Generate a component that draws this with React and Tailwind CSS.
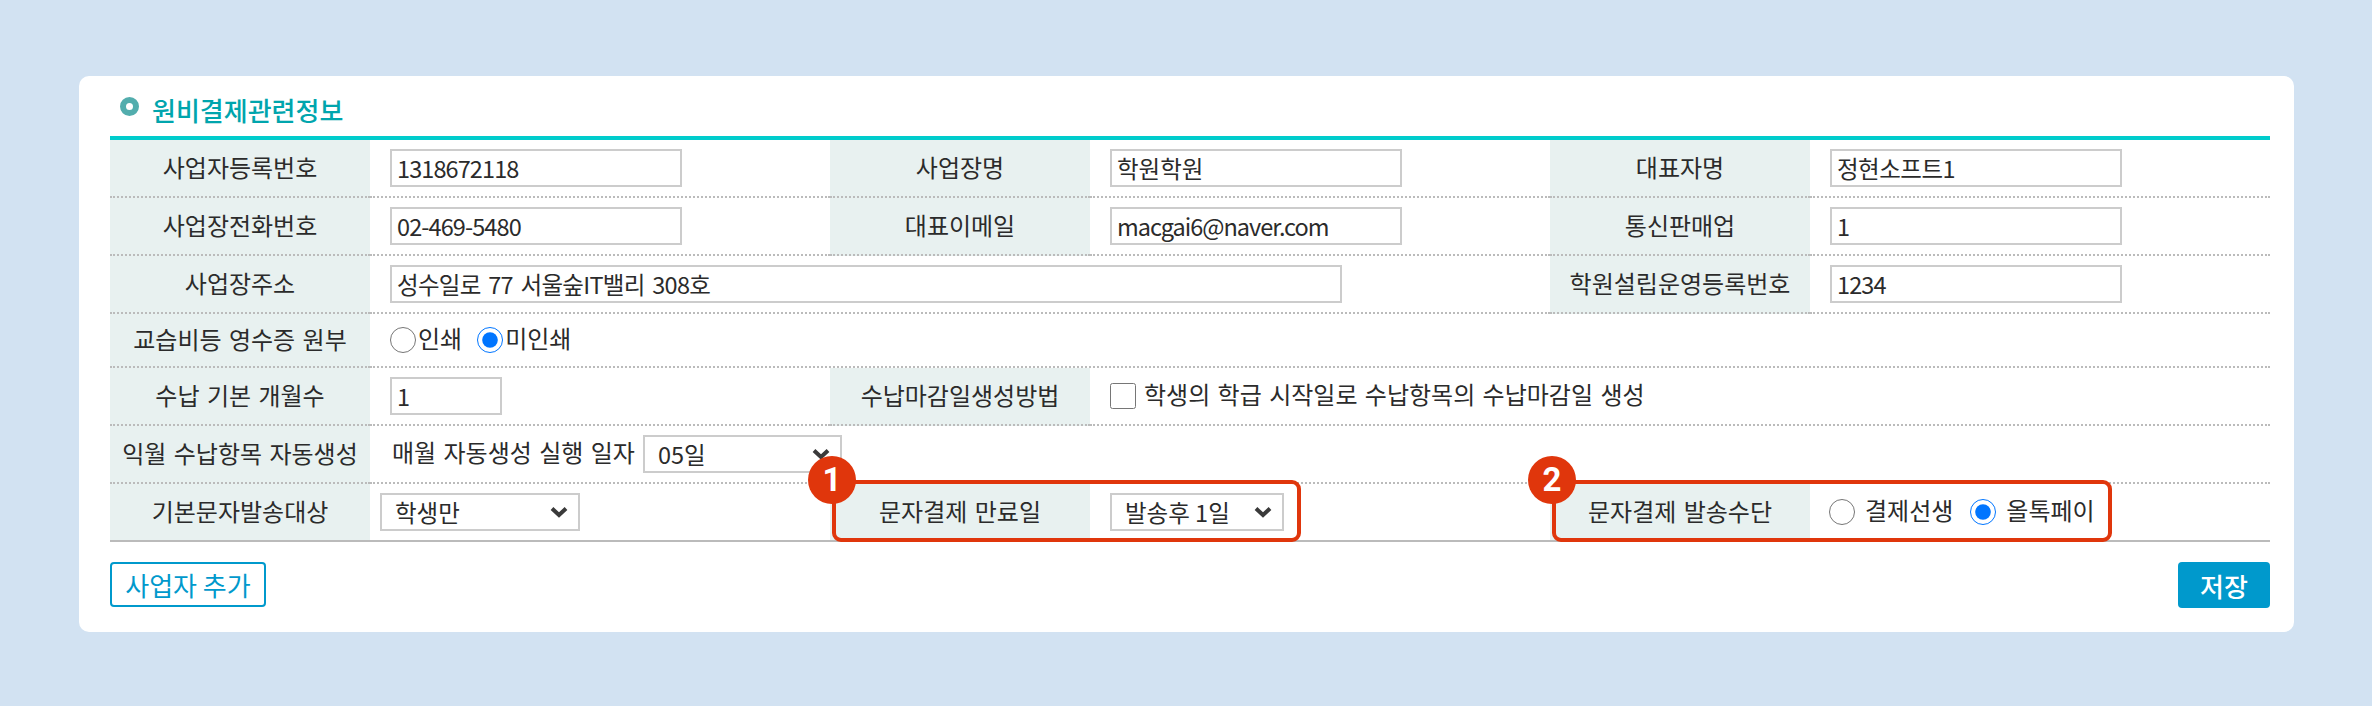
import React from 'react';

const labelCls = "bg-[#e8f1f0] text-center text-[#2b2b2b] border-b-2 border-dotted border-[#bbb] p-0 pb-[2px]";
const valueCls = "border-b-2 border-dotted border-[#bbb] p-0 pl-[20px] text-[#2b2b2b]";
const inputCls = "block h-[38px] border-2 border-[#ccc] bg-white px-[5px] text-[23.5px] text-[#2b2b2b] outline-none";

function Label({ children, className = '' }) {
    return <td className={`${labelCls} ${className}`}>{children}</td>;
}

function Field({ value, width = 'w-[292px]', className = '' }) {
    return <input readOnly type="text" defaultValue={value} className={`${inputCls} ${width} ${className}`} />;
}

// native arrow is too small, so the select gets its own chevron
function Select({ value, width }) {
    return (
        <div className={`relative ${width}`}>
            <select defaultValue={value} className="block h-[38px] w-full appearance-none border-2 border-[#ccc] bg-white pl-[13px] text-[23.5px] text-[#2b2b2b] outline-none">
                <option value={value}>{value}</option>
            </select>
            <svg className="absolute right-[12px] top-[13px] h-[12px] w-[18px] pointer-events-none" viewBox="0 0 18 12" fill="none">
                <path d="M2 2.5 L9 9 L16 2.5" stroke="#3a3a3a" strokeWidth="4" />
            </svg>
        </div>
    );
}

// red outline with the numbered badge, sits over the last table row
function Callout({ number, width }) {
    return (
        <div className={`absolute left-[2px] top-[-4px] h-[62px] ${width} rounded-[9px] border-4 border-[#e0360c] pointer-events-none`}>
            <div className="absolute left-[-28px] top-[-28px] flex h-[48px] w-[48px] items-center justify-center rounded-full bg-[#e0360c] font-['Roboto',sans-serif] text-[33px] font-bold text-white">
                {number}
            </div>
        </div>
    );
}

export default function App() {
    return (
        <div
            className="min-h-[706px] bg-[#d2e2f2] pl-[79px] pr-[78px] pt-[76px] pb-[74px] text-[24px] [word-spacing:2px]"
            style={{ fontFamily: '"Noto Sans CJK KR", "Noto Sans", sans-serif' }}
        >
            <div className="h-[556px] rounded-[10px] bg-white pl-[31px] pr-[24px]">
                <h2 className="flex h-[60px] items-center pl-[10px] text-[26px] font-medium text-[#00a5ad]">
                    <span className="mr-[13px] block h-[19px] w-[19px] rounded-full border-[6px] border-[#52adad] bg-white"></span>
                    <span className="mt-[7px]">원비결제관련정보</span>
                </h2>

                <table className="w-[2160px] table-fixed border-separate border-spacing-0 border-t-4 border-[#00cccc] border-b-0">
                    <colgroup>
                        <col className="w-[260px]" />
                        <col className="w-[460px]" />
                        <col className="w-[260px]" />
                        <col className="w-[460px]" />
                        <col className="w-[260px]" />
                        <col className="w-[460px]" />
                    </colgroup>
                    <tbody>
                        <tr className="h-[58px]">
                            <Label>사업자등록번호</Label>
                            <td className={valueCls}><Field value="1318672118" className="tracking-[-0.9px]" /></td>
                            <Label>사업장명</Label>
                            <td className={valueCls}><Field value="학원학원" /></td>
                            <Label>대표자명</Label>
                            <td className={valueCls}><Field value="정현소프트1" className="tracking-[-0.5px]" /></td>
                        </tr>
                        <tr className="h-[58px]">
                            <Label>사업장전화번호</Label>
                            <td className={valueCls}><Field value="02-469-5480" className="tracking-[-0.9px]" /></td>
                            <Label>대표이메일</Label>
                            <td className={valueCls}><Field value="macgai6@naver.com" className="tracking-[-1px]" /></td>
                            <Label>통신판매업</Label>
                            <td className={valueCls}><Field value="1" /></td>
                        </tr>
                        <tr className="h-[58px]">
                            <Label>사업장주소</Label>
                            <td colSpan={3} className={valueCls}>
                                <Field value="성수일로 77 서울숲IT밸리 308호" width="w-[952px]" className="tracking-[-0.7px] [word-spacing:3px]" />
                            </td>
                            <Label>학원설립운영등록번호</Label>
                            <td className={valueCls}><Field value="1234" className="tracking-[-0.9px]" /></td>
                        </tr>
                        <tr className="h-[54px]">
                            <Label>교습비등 영수증 원부</Label>
                            <td colSpan={5} className={valueCls}>
                                <div className="flex items-center">
                                    <input type="radio" name="receipt" className="m-0 h-[26px] w-[26px]" />
                                    <span className="ml-[2px] mr-[15px] mt-[-4px]">인쇄</span>
                                    <input type="radio" name="receipt" defaultChecked className="m-0 h-[26px] w-[26px]" />
                                    <span className="ml-[2px] mt-[-4px]">미인쇄</span>
                                </div>
                            </td>
                        </tr>
                        <tr className="h-[58px]">
                            <Label>수납 기본 개월수</Label>
                            <td className={valueCls}><Field value="1" width="w-[112px]" /></td>
                            <Label>수납마감일생성방법</Label>
                            <td colSpan={3} className={valueCls}>
                                <div className="flex items-center">
                                    <input type="checkbox" className="m-0 h-[26px] w-[26px]" />
                                    <span className="ml-[8px] mt-[-4px]">학생의 학급 시작일로 수납항목의 수납마감일 생성</span>
                                </div>
                            </td>
                        </tr>
                        <tr className="h-[58px]">
                            <Label>익월 수납항목 자동생성</Label>
                            <td colSpan={5} className={valueCls}>
                                <div className="flex items-center">
                                    <span className="ml-[2px] mr-[8px] mt-[-4px]">매월 자동생성 실행 일자</span>
                                    <Select value="05일" width="w-[199px]" />
                                </div>
                            </td>
                        </tr>
                        <tr className="h-[58px]">
                            <Label className="border-solid">기본문자발송대상</Label>
                            <td className="border-b-2 border-solid border-[#bbb] p-0 pl-[10px]">
                                <Select value="학생만" width="w-[200px]" />
                            </td>
                            <td className="relative bg-[#e8f1f0] p-0 pb-[2px] text-center text-[#2b2b2b] border-b-2 border-solid border-[#bbb]">
                                문자결제 만료일
                                <Callout number="1" width="w-[469px]" />
                            </td>
                            <td className="border-b-2 border-solid border-[#bbb] p-0 pl-[20px]">
                                <Select value="발송후 1일" width="w-[174px]" />
                            </td>
                            <td className="relative bg-[#e8f1f0] p-0 pb-[2px] text-center text-[#2b2b2b] border-b-2 border-solid border-[#bbb]">
                                문자결제 발송수단
                                <Callout number="2" width="w-[560px]" />
                            </td>
                            <td className="border-b-2 border-solid border-[#bbb] p-0 pl-[19px] text-[#2b2b2b]">
                                <div className="flex items-center">
                                    <input type="radio" name="send" className="m-0 h-[26px] w-[26px]" />
                                    <span className="ml-[10px] mr-[17px] mt-[-4px]">결제선생</span>
                                    <input type="radio" name="send" defaultChecked className="m-0 h-[26px] w-[26px]" />
                                    <span className="ml-[10px] mt-[-4px]">올톡페이</span>
                                </div>
                            </td>
                        </tr>
                    </tbody>
                </table>

                <div className="mt-[20px] flex items-start justify-between">
                    <button className="h-[45px] w-[156px] rounded-[4px] border-2 border-[#0099cc] bg-white text-[26px] text-[#0099cc]">
                        사업자 추가
                    </button>
                    <button className="h-[46px] w-[92px] rounded-[4px] bg-[#0099cc] text-[26px] font-medium text-white">
                        저장
                    </button>
                </div>
            </div>
        </div>
    );
}
